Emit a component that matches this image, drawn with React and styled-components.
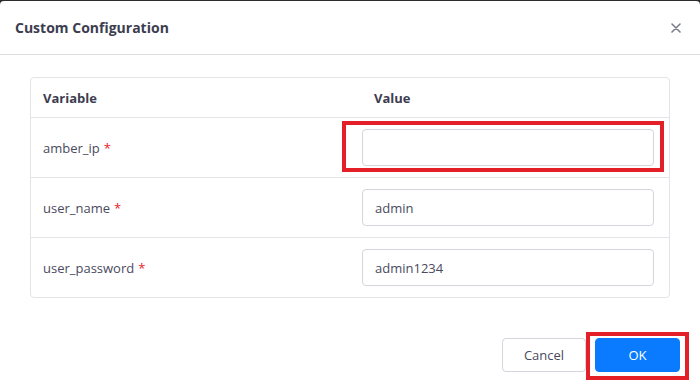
import styled, { createGlobalStyle } from 'styled-components'

const GlobalStyle = createGlobalStyle`
  html, body {
    margin: 0;
    padding: 0;
    background: #2c2c2c;
  }
  body {
    font-family: "Open Sans", "Liberation Sans", sans-serif;
  }
`

const Modal = styled.div`
  margin-top: 1px;
  width: 700px;
  height: 389px;
  background: #fff;
  border-radius: 4px 4px 0 0;
  display: flex;
  flex-direction: column;
`
const Header = styled.div`
  height: 54px;
  display: flex;
  align-items: center;
  justify-content: space-between;
  padding: 0 18px 0 15px;
  border-bottom: 1px solid #dedee2;
  box-sizing: border-box;
  flex-shrink: 0;
`
const Title = styled.h2`
  margin: 0;
  font-size: 14px;
  font-weight: 700;
  color: #3d3d50;
`
const Close = styled.button`
  border: none;
  background: none;
  padding: 0;
  width: 12px;
  height: 12px;
  display: flex;
  align-items: center;
  justify-content: center;
  cursor: pointer;
`
const Body = styled.div`
  padding: 22px 30px 0 30px;
`
const Card = styled.div`
  border: 1px solid #e4e4e8;
  border-radius: 4px;
`
const Row = styled.div`
  display: grid;
  grid-template-columns: 319px 1fr;
  height: ${props => props.head ? '39px' : '60px'};
  box-sizing: border-box;
  border-top: ${props => props.first ? 'none' : '1px solid #e4e4e8'};
  align-items: center;
`
const HeadCell = styled.div`
  font-size: 13px;
  font-weight: 700;
  color: #3d3d50;
  padding-left: ${props => props.inset || '12px'};
`
const Label = styled.div`
  font-size: 13px;
  color: #4a4a5e;
  padding-left: 12px;
`
const Star = styled.span`
  color: #e8232a;
  margin-left: 4px;
`
const ValueCell = styled.div`
  position: relative;
  padding: 0 15px 0 12px;
`
const Input = styled.input`
  box-sizing: border-box;
  width: 100%;
  height: 37px;
  border: 1px solid #d4d4dc;
  border-radius: 4px;
  padding: 0 12px;
  font-family: inherit;
  font-size: 13px;
  color: #4a4a5e;
  outline: none;
`
const Mark = styled.span`
  position: absolute;
  pointer-events: none;
  border: 4px solid #e32027;
  box-sizing: border-box;
  left: ${props => props.l}px;
  right: ${props => props.r}px;
  top: ${props => props.t}px;
  bottom: ${props => props.b}px;
`
const Footer = styled.div`
  margin-top: auto;
  display: flex;
  justify-content: flex-end;
  gap: 9px;
  padding: 0 20px 18px 0;
`
const Button = styled.button`
  position: relative;
  height: 34px;
  min-width: ${props => props.primary ? '85px' : '84px'};
  border-radius: 4px;
  border: 1px solid ${props => props.primary ? '#0a7bff' : '#d4d4dc'};
  background: ${props => props.primary ? '#0a7bff' : '#fff'};
  color: ${props => props.primary ? '#fff' : '#4a4a5e'};
  font-family: inherit;
  font-size: 13px;
  cursor: pointer;
`

const rows = [
  { name: 'amber_ip', value: '', marked: true },
  { name: 'user_name', value: 'admin' },
  { name: 'user_password', value: 'admin1234' },
]

const App = () => (
  <>
    <GlobalStyle />
    <Modal>
      <Header>
        <Title>Custom Configuration</Title>
        <Close aria-label="close">
          <svg width="10" height="10" viewBox="0 0 10 10">
            <path d="M1 1 L9 9 M9 1 L1 9" stroke="#7c7c8c" strokeWidth="1.6" strokeLinecap="round" />
          </svg>
        </Close>
      </Header>
      <Body>
        <Card>
          <Row head first>
            <HeadCell>Variable</HeadCell>
            <HeadCell inset="24px">Value</HeadCell>
          </Row>
          {rows.map(r => (
            <Row key={r.name}>
              <Label>{r.name}<Star>*</Star></Label>
              <ValueCell>
                <Input defaultValue={r.value} />
                {r.marked && <Mark l={-8} r={5} t={-8} b={-6} />}
              </ValueCell>
            </Row>
          ))}
        </Card>
      </Body>
      <Footer>
        <Button>Cancel</Button>
        <Button primary>
          OK
          <Mark l={-10} r={-10} t={-7} b={-9} />
        </Button>
      </Footer>
    </Modal>
  </>
)

export default App
